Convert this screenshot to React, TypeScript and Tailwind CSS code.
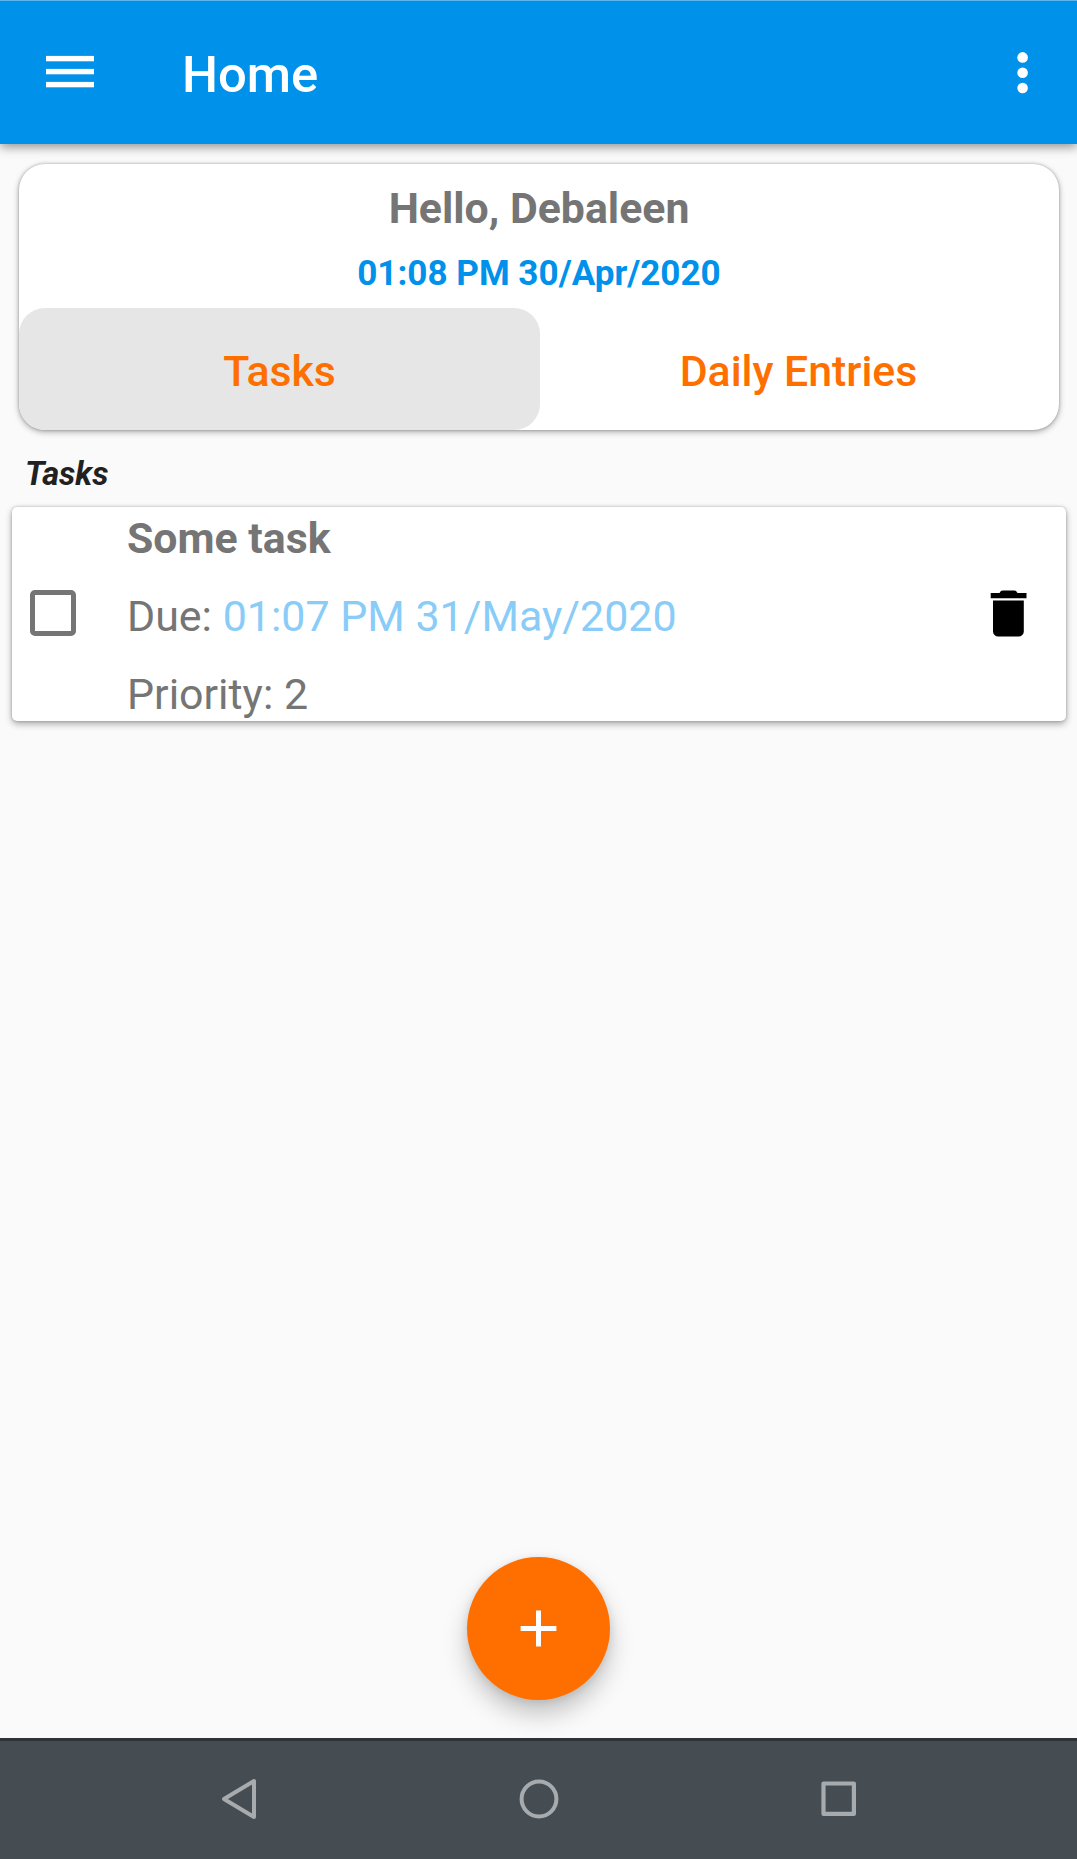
function AppBar() {
  return (
    <header className="z-10 flex h-36 shrink-0 items-center border-t border-[#5eb6f0] bg-[#0091ea] pr-[38px] pl-[46px] text-white shadow-[0_3px_10px_rgba(0,0,0,0.42)]">
      <svg className="mt-[-1px]" width="48" height="34" viewBox="0 0 48 34" fill="currentColor">
        <rect y="0.9" width="48" height="5.4" />
        <rect y="13.9" width="48" height="5.4" />
        <rect y="26.9" width="48" height="5.4" />
      </svg>
      <h1 className="mt-[5px] ml-[88px] text-[50.8px] leading-[60px] font-medium">Home</h1>
      <svg className="ml-auto" width="33" height="42" viewBox="0 0 33 42" fill="currentColor">
        <circle cx="16.6" cy="5.4" r="5.3" />
        <circle cx="16.6" cy="20.7" r="5.3" />
        <circle cx="16.6" cy="36" r="5.3" />
      </svg>
    </header>
  );
}

function SummaryCard() {
  return (
    <section className="mt-5 mr-[18px] ml-[19px] flex h-[266px] flex-col overflow-hidden rounded-[26px] bg-white text-center shadow-[0_2px_6px_rgba(0,0,0,0.32),0_0_3px_rgba(0,0,0,0.24)]">
      <div className="h-[144px] pt-[18px]">
        <p className="text-[42.8px] leading-[52px] font-bold text-[#757575]">Hello, Debaleen</p>
        <p className="mt-[18px] text-[35.1px] leading-[42px] font-bold text-[#0091ea]">01:08 PM 30/Apr/2020</p>
      </div>
      <div className="grid h-[122px] grid-cols-[521px_1fr] text-[42.8px] font-medium text-[#ff6f00]">
        <button className="rounded-[26px] bg-[#e6e6e6] pt-[5px]">Tasks</button>
        <button className="pt-[5px] pr-0.5">Daily Entries</button>
      </div>
    </section>
  );
}

function TaskCard() {
  return (
    <article className="mr-[11px] ml-3 flex h-[214px] items-center rounded-[5px] bg-white pr-[39px] pl-[18px] text-[42.95px] leading-[54px] text-[#757575] shadow-[0_3px_7px_rgba(0,0,0,0.32),0_0_3px_rgba(0,0,0,0.24)]">
      <button aria-label="Complete task" className="mt-[-2px] size-[46px] rounded-[5px] border-5 border-[#757575]" />
      <div className="mt-1 ml-[51px] flex flex-col gap-6 self-start">
        <h2 className="text-[42.8px] font-bold">Some task</h2>
        <p>
          Due: <span className="text-[#88ccf7]">01:07 PM 31/May/2020</span>
        </p>
        <p>Priority: 2</p>
      </div>
      <svg className="mt-[-1px] ml-auto" width="37" height="47" viewBox="0 0 37 47" fill="#000">
        <path d="M.7 3.1H9.5C10.5 1.3 11.2.5 12.7.5H24.3C25.8.5 26.5 1.3 27.5 3.1H36.5V8.3H.7Z" />
        <path d="M3 10.5H33.8V41.4A5.2 5.2 0 0 1 28.6 46.6H8.2A5.2 5.2 0 0 1 3 41.4Z" />
      </svg>
    </article>
  );
}

function NavigationBar() {
  return (
    <nav className="z-10 flex h-[121px] shrink-0 items-center justify-between border-t-3 border-[#2d3335] bg-[#454d53] pr-[218px] pb-[2px] pl-[219px] text-[#a7abae]">
      <svg width="40" height="42" viewBox="0 0 40 42" fill="none" stroke="currentColor" strokeWidth="4" strokeLinejoin="round">
        <path d="M5 21L35 3V39Z" />
      </svg>
      <svg width="40" height="40" viewBox="0 0 40 40" fill="none" stroke="currentColor" strokeWidth="4">
        <circle cx="20" cy="20" r="17.4" />
      </svg>
      <svg width="40" height="40" viewBox="0 0 40 40" fill="none" stroke="currentColor" strokeWidth="4.2" strokeLinejoin="round">
        <rect x="4.5" y="4.5" width="30.4" height="30.4" />
      </svg>
    </nav>
  );
}

export default function App() {
  return (
    <div className="flex h-[1859px] w-[1077px] flex-col overflow-hidden bg-[#fafafa] font-['Roboto',sans-serif]">
      <AppBar />
      <main className="flex flex-1 flex-col">
        <SummaryCard />
        <h2 className="mt-6 mb-[13px] ml-[25px] text-[32.6px] leading-10 font-bold text-[#212121] italic">Tasks</h2>
        <TaskCard />
        <button aria-label="Add task" className="mx-auto mt-auto mb-[38px] flex size-[143px] items-center justify-center rounded-full bg-[#ff6f00] shadow-[0_14px_24px_rgba(0,0,0,0.22),0_2px_8px_rgba(0,0,0,0.1)]">
          <svg width="37" height="37" viewBox="0 0 37 37" fill="none" stroke="#fff" strokeWidth="5">
            <path d="M.6 18.5H36.4M18.5 .6V36.4" />
          </svg>
        </button>
      </main>
      <NavigationBar />
    </div>
  );
}
